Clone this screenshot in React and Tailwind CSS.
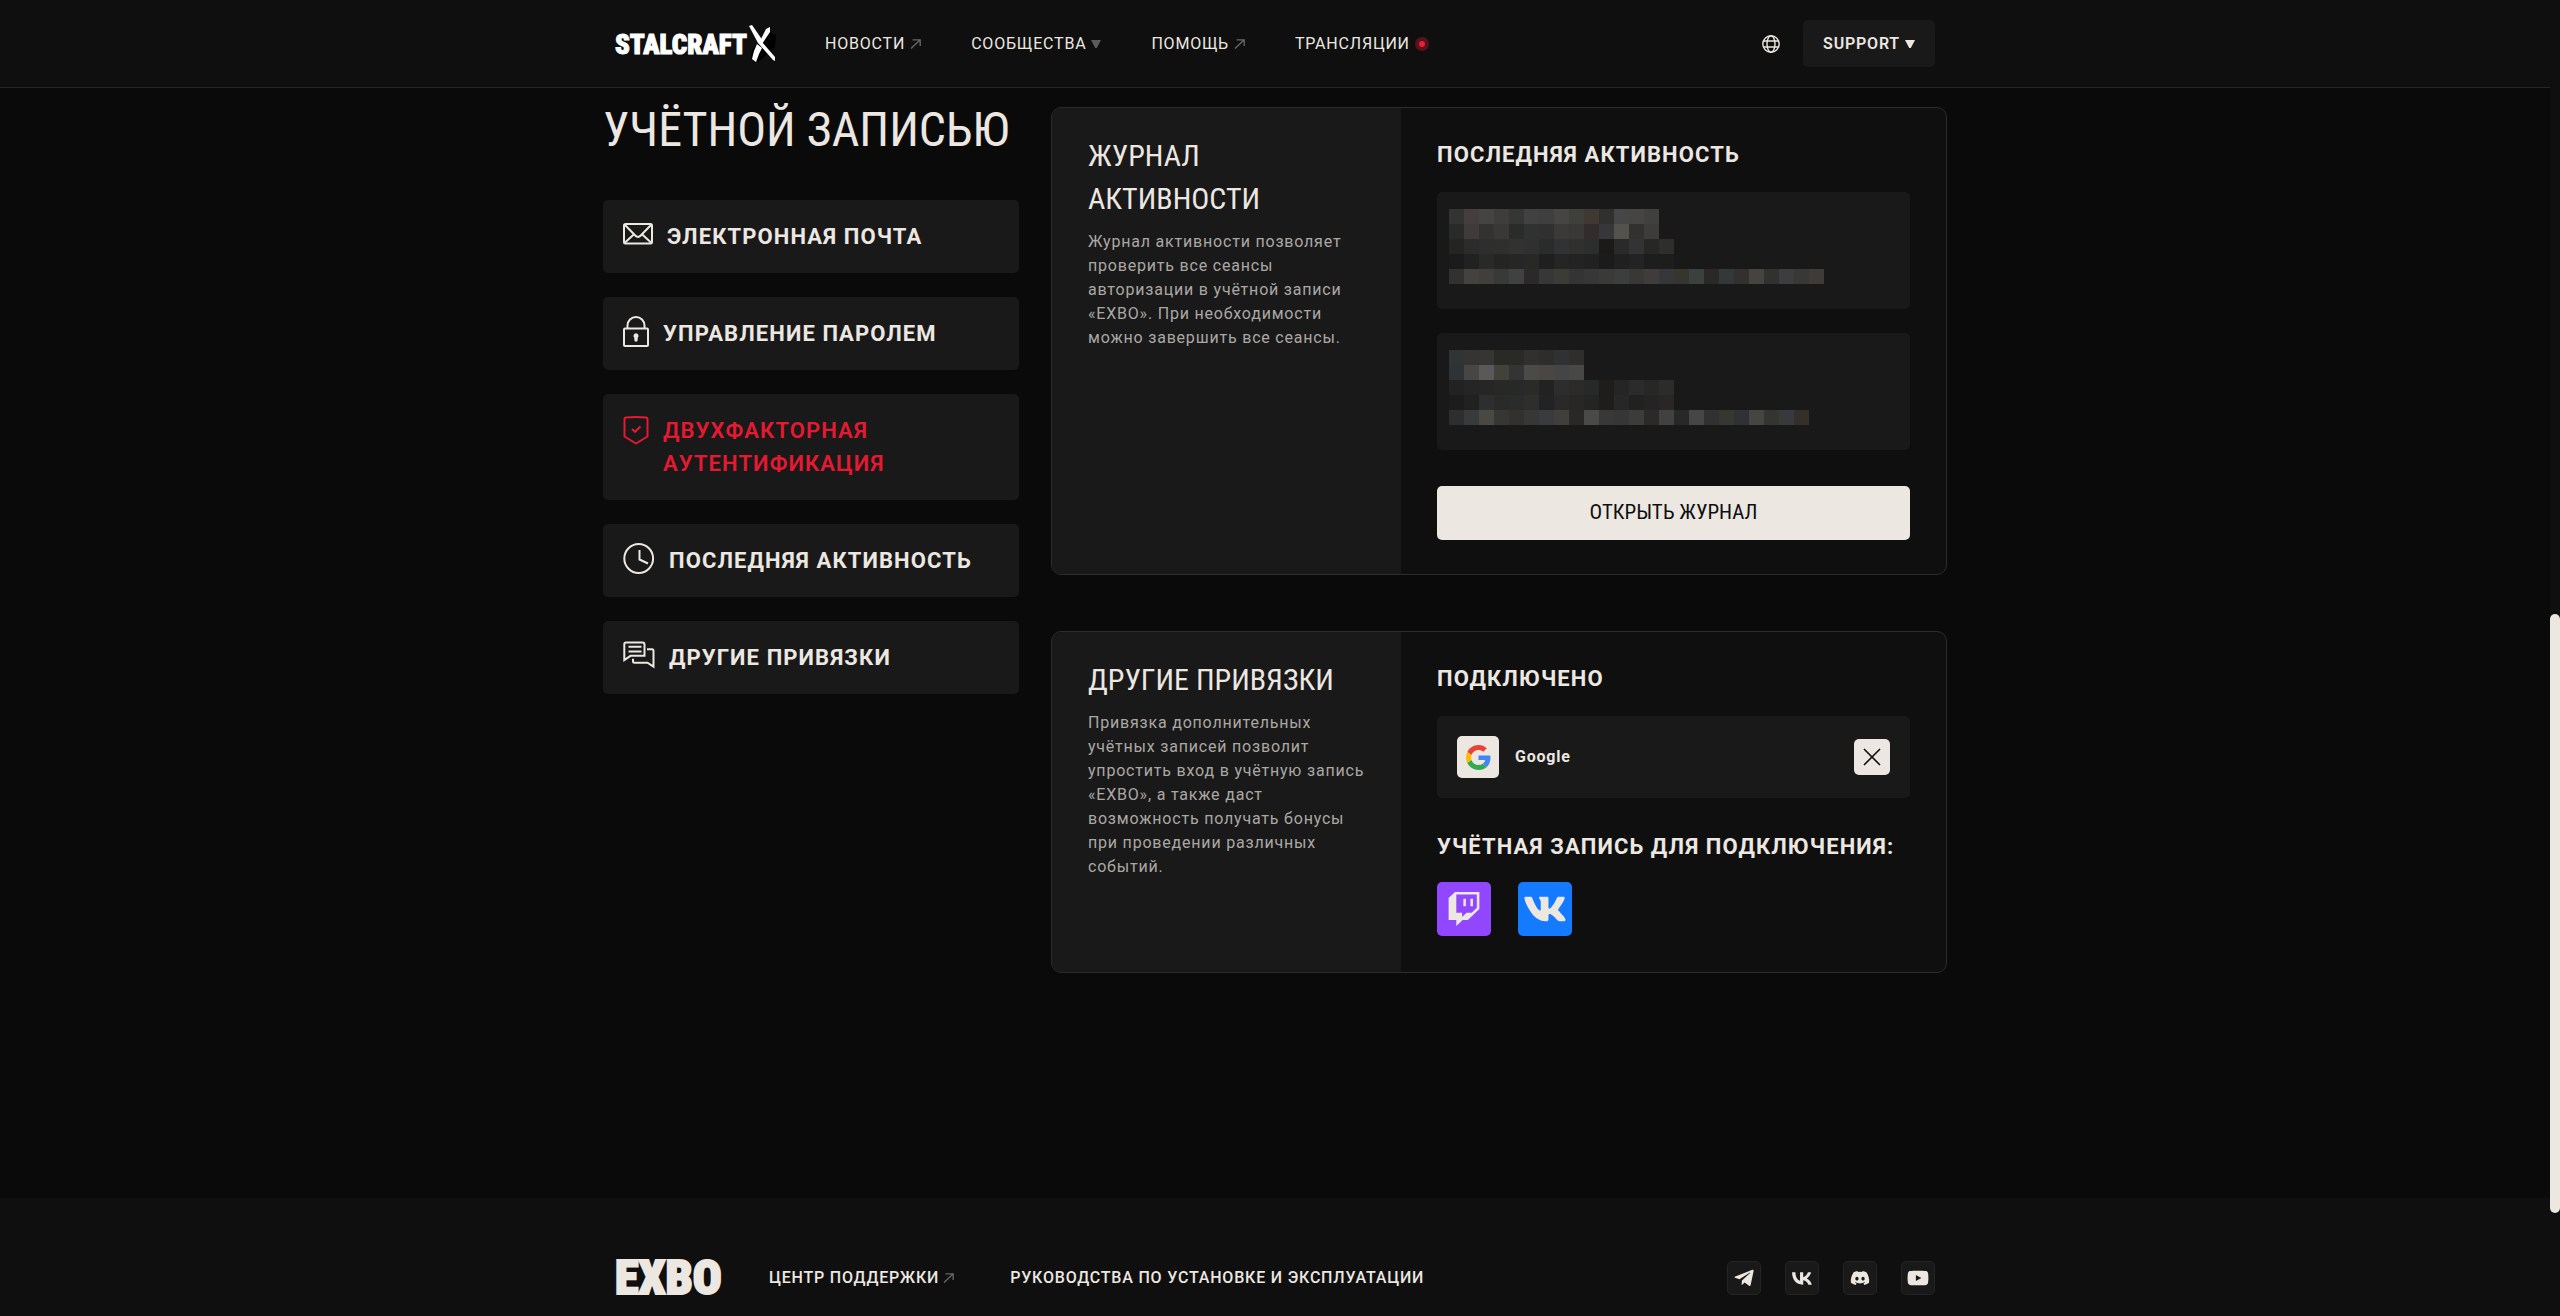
import React from 'react';
import { FaDiscord, FaTelegramPlane, FaTwitch, FaVk, FaYoutube } from 'react-icons/fa';

const CONDENSED = "font-['Liberation_Sans_Narrow','Roboto_Condensed','Roboto',sans-serif]";

const EnvelopeIcon = () => (
  <svg width="30" height="22" viewBox="0 0 30 22" fill="none" stroke="currentColor" strokeWidth="2">
    <rect x="1" y="1" width="28" height="19.5" rx="1.5" />
    <path d="M2 2l10.5 10.8a3.4 3.4 0 0 0 5 0L28 2M2 19.5l9-8.3M28 19.5l-9-8.3" />
  </svg>
);

const LockIcon = () => (
  <svg width="26" height="31" viewBox="0 0 26 31" fill="none" stroke="currentColor" strokeWidth="2">
    <rect x="1" y="12.5" width="24" height="17.5" rx="1" />
    <path d="M4.5 12V9.5a8.5 8.5 0 0 1 17 0V12" />
    <path d="M13 17.2a2.6 2.6 0 0 1 1.7 4.5V24a1.7 1.7 0 0 1-3.4 0v-2.3a2.6 2.6 0 0 1 1.7-4.5z" fill="currentColor" stroke="none" />
  </svg>
);

const ShieldIcon = () => (
  <svg width="26" height="34" viewBox="0 0 26 34" fill="none" stroke="currentColor" strokeWidth="2">
    <path d="M1.5 8c0-.8.5-1.3 1.3-1.4 6.7-.9 13.7-.9 20.4 0 .8.1 1.3.6 1.3 1.4v17.5l-11.500 7-11.500-7z" strokeLinejoin="round" />
    <path d="M9 18l3 2.8 5.5-5.3" />
  </svg>
);

const ClockIcon = () => (
  <svg width="32" height="31" viewBox="0 0 32 31" fill="none" stroke="currentColor" strokeWidth="2">
    <circle cx="15.7" cy="15.5" r="14.4" />
    <path d="M16.5 7v9.500l8.500 4" />
  </svg>
);

const ChatsIcon = () => (
  <svg width="32" height="28" viewBox="0 0 32 28" fill="none" stroke="currentColor" strokeWidth="2">
    <path d="M3 1.500h16.500c1.300 0 2 .7 2 2v11.300H7.500L1.300 19V3.300c0-1.100.7-1.800 1.700-1.800z" />
    <path d="M5.500 5.800h13M5.500 10.500h13M24 8.200h5c1 0 1.500.6 1.500 1.500v16l-6-4H11.500c-1 0-1.500-.5-1.500-1.500v-2.500" />
  </svg>
);

const GlobeIcon = () => (
  <svg width="18" height="18" viewBox="0 0 18 18" fill="none" stroke="currentColor" strokeWidth="1.4">
    <circle cx="9" cy="9" r="8.2" />
    <ellipse cx="9" cy="9" rx="4" ry="8.2" />
    <path d="M1.5 6h15M1.5 12h15" />
  </svg>
);

const ArrowIcon = () => (
  <svg width="11" height="10" viewBox="0 0 11 10" fill="none" stroke="#6a6866" strokeWidth="1.3">
    <path d="M1 9.500L10 1M2.500 .8H10.200V7" />
  </svg>
);

const CaretIcon = ({ className }) => (
  <svg width="10" height="8" viewBox="0 0 10 8" fill="currentColor" className={className}>
    <path d="M0 0h10L5.800 8H4.200z" />
  </svg>
);

const LiveIcon = () => (
  <svg width="14" height="14" viewBox="0 0 14 14">
    <circle cx="7" cy="7" r="7" fill="#56131d" />
    <circle cx="7" cy="7" r="3" fill="#f01c34" />
  </svg>
);

// Crossed planks beside the wordmark
const PlanksIcon = () => (
  <svg width="30" height="38" viewBox="0 0 30 38" className="shrink-0">
    <path d="M22 7l7 3-1 12-7 6-9 9-8-3 1-9 5-6z" fill="#000" />
    <path d="M2 1l3-1 9 13 1 4 13 15v4l-2-1L11 18z" fill="#fff" />
    <path d="M19 4l4-2v5l-8 12-2-3zM10 19l5 4-3 6-3 8-4-3 2-8z" fill="#fff" />
  </svg>
);

const GoogleIcon = () => (
  <svg width="25" height="25" viewBox="0 0 48 48">
    <path fill="#EA4335" d="M24 9.5c3.54 0 6.71 1.22 9.21 3.6l6.85-6.85C35.9 2.38 30.47 0 24 0 14.62 0 6.51 5.38 2.56 13.22l7.98 6.19C12.43 13.72 17.74 9.5 24 9.5z" />
    <path fill="#4285F4" d="M46.98 24.55c0-1.57-.15-3.09-.38-4.55H24v9.02h12.94c-.58 2.96-2.26 5.48-4.78 7.18l7.73 6c4.51-4.18 7.09-10.36 7.09-17.65z" />
    <path fill="#FBBC05" d="M10.53 28.59c-.48-1.45-.76-2.99-.76-4.59s.27-3.14.76-4.59l-7.98-6.19C.92 16.46 0 20.12 0 24c0 3.88.92 7.54 2.56 10.78l7.97-6.19z" />
    <path fill="#34A853" d="M24 48c6.48 0 11.93-2.13 15.89-5.81l-7.73-6c-2.15 1.45-4.92 2.3-8.16 2.3-6.26 0-11.57-4.22-13.47-9.91l-7.98 6.19C6.51 42.62 14.62 48 24 48z" />
  </svg>
);

const VkGlyph = () => (
  <svg width="20" height="13" viewBox="3.4 7.8 18 11.3" fill="currentColor">
    <path d="M13.162 18.994c-6.098 0-9.57-4.172-9.714-11.104h3.047c.1 5.093 2.346 7.25 4.124 7.694V7.89h2.868v4.392c1.756-.189 3.601-2.19 4.223-4.392h2.868c-.478 2.712-2.479 4.713-3.901 5.537 1.422.667 3.701 2.412 4.568 5.567h-3.157c-.678-2.112-2.368-3.747-4.601-3.969v3.969z" />
  </svg>
);

const NAV_LINKS = [
  { label: 'Новости', icon: <ArrowIcon /> },
  { label: 'Сообщества', icon: <CaretIcon className="text-[#5c5b5a]" /> },
  { label: 'Помощь', icon: <ArrowIcon /> },
  { label: 'Трансляции', icon: <LiveIcon /> },
];

const SECTIONS = [
  { label: 'Электронная почта', icon: <EnvelopeIcon /> },
  { label: 'Управление паролем', icon: <LockIcon /> },
  { label: 'Двухфакторная аутентификация', icon: <ShieldIcon />, active: true },
  { label: 'Последняя активность', icon: <ClockIcon /> },
  { label: 'Другие привязки', icon: <ChatsIcon /> },
];

const SOCIALS = [
  { label: 'Telegram', icon: <FaTelegramPlane size={22} /> },
  { label: 'VK', icon: <VkGlyph /> },
  { label: 'Discord', icon: <FaDiscord size={20} /> },
  { label: 'YouTube', icon: <FaYoutube size={22} /> },
];

// Masked session details, one hex colour per 15px cell
const SESSIONS = [
  [
    '333333 443f3e 454344 3f3d3b 363636 414142 403f40 474543 3f3f3c 3f3833 30302e 444746 464543 40403e',
    '292b2b 403b3a 323232 393836 2b2b2b 303232 312f30 3c3a38 393836 322d2c 35373a 53524d 323130 3c3c3b 1b1819',
    '242423 2b2c2b 2e2e2e 2f2f2e 323232 303030 2a2b2b 303234 30312f 2c2d2d 1c1a18 2a2a2b 333333 272725 2e2e2c',
    '1b1b1b 212121 292929 242420 262626 282826 1f1f1f 252525 232323 212121 1b1b1b 202020 232323 1d1d1d 1d1d1d',
    '313131 43423f 403f3c 373a39 414141 2b2a28 363737 3b3b38 343434 373737 3a3a38 3c3d3d 383836 3f3c3b 35373a 37352f 3c403f 2a2928 353838 32312f 454440 31312f 3d3d3f 383836 3e3b39',
  ],
  [
    '303435 353432 353533 292926 292927 31302e 2d2d2b 303132 2f2e2d',
    '303335 474645 595959 42423a 343434 4a4a48 4a4644 454546 484847',
    '222222 252525 262626 282827 262928 2b2a29 222222 2d2d2d 2d2b2a 262928 1f1c1c 252525 2b2b2b 272727 2c2c2a',
    '1c1c1c 212121 2c2f2e 2a2a28 2b2b2b 2e2e2c 232323 292929 272727 242424 1e1d1c 272727 212121 242424 282725',
    '2e2e2e 383a3c 494844 363634 323130 373735 3a3b3e 403f3b 292827 4a4a48 383838 363636 3c3c3a 2b2a29 414141 282828 464646 313131 373732 303134 454543 343530 37393c 352f2c',
  ],
];

const Mosaic = ({ rows }) => (
  <div aria-hidden="true">
    {rows.map((row, y) => (
      <div key={y} className="flex">
        {row.split(' ').map((color, x) => (
          <span key={x} className="size-[15px]" style={{ backgroundColor: `#${color}` }} />
        ))}
      </div>
    ))}
  </div>
);

const Card = ({ title, description, children }) => (
  <section className="flex overflow-hidden rounded-[10px] border border-[#2c2c2c] bg-[#0f0f0f]">
    <div className="w-[349px] shrink-0 bg-[#191919] px-9 pt-[26px]">
      <h2 className={`${CONDENSED} text-[30px] leading-[43px] uppercase`}>{title}</h2>
      <p className="mt-2.5 text-base leading-6 tracking-wider text-[#aba8a4]">{description}</p>
    </div>
    <div className="flex-1 px-9 pt-9 pb-[34px]">{children}</div>
  </section>
);

const CardHeading = ({ children }) => (
  <h3 className="text-[22px] leading-[22px] font-bold uppercase tracking-wider">{children}</h3>
);

const Header = () => (
  <header className="border-b border-[#262626] bg-[#0f0f0f]">
    <div className="mx-auto flex h-[87px] max-w-[1320px] items-center">
      <a href="#" className="flex w-[160px] shrink-0 items-center text-white">
        <span className={`${CONDENSED} pt-1 text-[27px] leading-none font-black [-webkit-text-stroke:1px]`}>STALCRAFT</span>
        <PlanksIcon />
      </a>
      <nav className="ml-[50px] flex gap-[50px]">
        {NAV_LINKS.map(({ label, icon }) => (
          <a key={label} href="#" className="flex items-center gap-[5px] text-base uppercase tracking-wider">
            {label}
            {icon}
          </a>
        ))}
      </nav>
      <button aria-label="Язык" className="ml-auto">
        <GlobeIcon />
      </button>
      <button className="ml-[23px] flex h-[47px] items-center gap-[5px] rounded-[5px] bg-[#191919] px-5 text-base font-semibold uppercase tracking-wider">
        Support
        <CaretIcon />
      </button>
    </div>
  </header>
);

const Sidebar = () => (
  <aside className="w-[416px] shrink-0">
    <h1 className={`${CONDENSED} pb-7 text-[48px] leading-[84px] uppercase whitespace-nowrap`}>
      учётной записью
    </h1>
    <nav className="flex flex-col gap-6">
      {SECTIONS.map(({ label, icon, active }) => (
        <a
          key={label}
          href="#"
          className={`flex items-start gap-3.5 rounded-[5px] bg-[#191919] p-5 text-[22px] leading-[33px] uppercase tracking-wider ${
            active ? 'font-semibold text-[#e61932]' : 'font-bold'
          }`}
        >
          <span className="flex h-7 shrink-0 items-center">{icon}</span>
          {label}
        </a>
      ))}
    </nav>
  </aside>
);

const Footer = () => (
  <footer className="bg-[#0f0f0f] pt-[63px] pb-[21px]">
    <div className="mx-auto flex h-[34px] max-w-[1320px] items-center">
      <a href="#" className={`${CONDENSED} w-[106px] shrink-0 text-[48px] leading-none font-black [-webkit-text-stroke:2px]`}>
        EXBO
      </a>
      <nav className="ml-12 flex gap-14 text-base font-medium uppercase tracking-wider">
        <a href="#" className="flex items-center gap-1">
          Центр поддержки
          <ArrowIcon />
        </a>
        <a href="#">Руководства по установке и эксплуатации</a>
      </nav>
      <div className="ml-auto flex gap-6">
        {SOCIALS.map(({ label, icon }) => (
          <a
            key={label}
            href="#"
            aria-label={label}
            className="flex size-[34px] items-center justify-center rounded-[5px] border border-[#242424] bg-[#191919]"
          >
            {icon}
          </a>
        ))}
      </div>
    </div>
  </footer>
);

const App = () => (
  <div className="flex min-h-screen bg-[#0a0a0a] font-['Roboto',sans-serif] text-[#ece7e1]">
    <div className="flex min-w-0 flex-1 flex-col">
      <Header />
      <main className="mx-auto flex w-full max-w-[1344px] flex-1 items-start gap-8">
        <Sidebar />
        <div className="flex flex-1 flex-col gap-14 pt-[19px]">
          <Card
            title="Журнал активности"
            description="Журнал активности позволяет проверить все сеансы авторизации в учётной записи «EXBO». При необходимости можно завершить все сеансы."
          >
            <CardHeading>Последняя активность</CardHeading>
            <div className="mt-[26px] flex flex-col gap-6">
              {SESSIONS.map((rows, i) => (
                <div key={i} className="h-[117px] overflow-hidden rounded-[5px] bg-[#191919] px-3 pt-[17px]">
                  <Mosaic rows={rows} />
                </div>
              ))}
            </div>
            <button className={`${CONDENSED} mt-9 h-[54px] w-full rounded-[5px] bg-[#ece7e1] text-[21px] uppercase text-[#0f0f0f]`}>
              Открыть журнал
            </button>
          </Card>

          <Card
            title="Другие привязки"
            description="Привязка дополнительных учётных записей позволит упростить вход в учётную запись «EXBO», а также даст возможность получать бонусы при проведении различных событий."
          >
            <CardHeading>Подключено</CardHeading>
            <div className="mt-[26px] mb-[38px] flex items-center rounded-[5px] bg-[#191919] p-5">
              <span className="flex size-[42px] items-center justify-center rounded-[5px] bg-[#ece7e1]">
                <GoogleIcon />
              </span>
              <span className="ml-4 text-base font-bold tracking-wider">Google</span>
              <button aria-label="Отвязать Google" className="ml-auto flex size-9 items-center justify-center rounded-[5px] bg-[#ece7e1]">
                <svg width="18" height="18" viewBox="0 0 18 18" stroke="#0f0f0f" strokeWidth="1.6">
                  <path d="M1 1l16 16M17 1L1 17" />
                </svg>
              </button>
            </div>
            <CardHeading>Учётная запись для подключения:</CardHeading>
            <div className="mt-6 mb-0.5 flex gap-[27px]">
              <button aria-label="Twitch" className="flex size-[54px] items-center justify-center rounded-[5px] bg-[#9146ff]">
                <FaTwitch size={34} />
              </button>
              <button aria-label="VK" className="flex size-[54px] items-center justify-center rounded-[5px] bg-[#147aff]">
                <FaVk size={44} />
              </button>
            </div>
          </Card>
        </div>
      </main>
      <Footer />
    </div>
    <div className="flex w-2.5 flex-col bg-[#0f0f0f]" aria-hidden="true">
      <div className="grow-[614]" />
      <div className="grow-[599] rounded-full bg-[#ece7e1]" />
      <div className="grow-[103]" />
    </div>
  </div>
);

export default App;
